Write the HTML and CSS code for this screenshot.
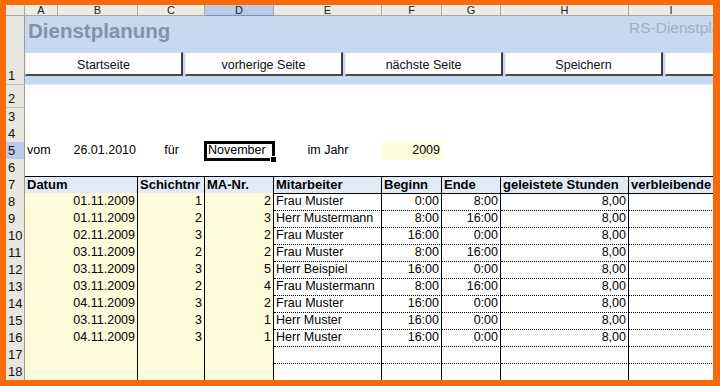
FILE: index.html
```html
<!DOCTYPE html>
<html>
<head>
  <meta charset="utf-8">
  <title>Dienstplanung</title>
  <link rel="stylesheet" href="styles.css">
</head>
<body>
  <div class="frame">
    <div class="row col-heads">
      <div class="corner"></div>
      <div class="colhead">A</div>
      <div class="colhead">B</div>
      <div class="colhead">C</div>
      <div class="colhead selected">D</div>
      <div class="colhead">E</div>
      <div class="colhead">F</div>
      <div class="colhead">G</div>
      <div class="colhead">H</div>
      <div class="colhead">I</div>
    </div>

    <div class="row row-banner">
      <div class="rowhead">1</div>
      <div class="banner">
        <div class="banner-top">
          <span class="title">Dienstplanung</span>
          <span class="subtitle">RS-Dienstplanung</span>
        </div>
        <div class="buttons">
          <button class="sheet-button">Startseite</button>
          <button class="sheet-button">vorherige Seite</button>
          <button class="sheet-button">nächste Seite</button>
          <button class="sheet-button">Speichern</button>
          <button class="sheet-button"></button>
        </div>
      </div>
    </div>

    <div class="row row-tall"><div class="rowhead">2</div></div>
    <div class="row"><div class="rowhead">3</div></div>
    <div class="row"><div class="rowhead">4</div></div>

    <div class="row">
      <div class="rowhead selected">5</div>
      <div class="plain">vom</div>
      <div class="plain num">26.01.2010</div>
      <div class="plain center">für</div>
      <div class="plain active">November</div>
      <div class="plain center">im Jahr</div>
      <div class="plain num yellow">2009</div>
    </div>

    <div class="row"><div class="rowhead">6</div></div>

    <div class="row">
      <div class="rowhead">7</div>
      <div class="head span2">Datum</div>
      <div class="head">Schichtnr</div>
      <div class="head">MA-Nr.</div>
      <div class="head">Mitarbeiter</div>
      <div class="head">Beginn</div>
      <div class="head">Ende</div>
      <div class="head">geleistete Stunden</div>
      <div class="head">verbleibende</div>
    </div>

    <div class="row">
      <div class="rowhead">8</div>
      <div class="cell span2 yellow num">01.11.2009</div>
      <div class="cell yellow num">1</div>
      <div class="cell yellow num">2</div>
      <div class="cell">Frau Muster</div>
      <div class="cell num">0:00</div>
      <div class="cell num">8:00</div>
      <div class="cell num">8,00</div>
      <div class="cell"></div>
    </div>
    <div class="row">
      <div class="rowhead">9</div>
      <div class="cell span2 yellow num">01.11.2009</div>
      <div class="cell yellow num">2</div>
      <div class="cell yellow num">3</div>
      <div class="cell">Herr Mustermann</div>
      <div class="cell num">8:00</div>
      <div class="cell num">16:00</div>
      <div class="cell num">8,00</div>
      <div class="cell"></div>
    </div>
    <div class="row">
      <div class="rowhead">10</div>
      <div class="cell span2 yellow num">02.11.2009</div>
      <div class="cell yellow num">3</div>
      <div class="cell yellow num">2</div>
      <div class="cell">Frau Muster</div>
      <div class="cell num">16:00</div>
      <div class="cell num">0:00</div>
      <div class="cell num">8,00</div>
      <div class="cell"></div>
    </div>
    <div class="row">
      <div class="rowhead">11</div>
      <div class="cell span2 yellow num">03.11.2009</div>
      <div class="cell yellow num">2</div>
      <div class="cell yellow num">2</div>
      <div class="cell">Frau Muster</div>
      <div class="cell num">8:00</div>
      <div class="cell num">16:00</div>
      <div class="cell num">8,00</div>
      <div class="cell"></div>
    </div>
    <div class="row">
      <div class="rowhead">12</div>
      <div class="cell span2 yellow num">03.11.2009</div>
      <div class="cell yellow num">3</div>
      <div class="cell yellow num">5</div>
      <div class="cell">Herr Beispiel</div>
      <div class="cell num">16:00</div>
      <div class="cell num">0:00</div>
      <div class="cell num">8,00</div>
      <div class="cell"></div>
    </div>
    <div class="row">
      <div class="rowhead">13</div>
      <div class="cell span2 yellow num">03.11.2009</div>
      <div class="cell yellow num">2</div>
      <div class="cell yellow num">4</div>
      <div class="cell">Frau Mustermann</div>
      <div class="cell num">8:00</div>
      <div class="cell num">16:00</div>
      <div class="cell num">8,00</div>
      <div class="cell"></div>
    </div>
    <div class="row">
      <div class="rowhead">14</div>
      <div class="cell span2 yellow num">04.11.2009</div>
      <div class="cell yellow num">3</div>
      <div class="cell yellow num">2</div>
      <div class="cell">Frau Muster</div>
      <div class="cell num">16:00</div>
      <div class="cell num">0:00</div>
      <div class="cell num">8,00</div>
      <div class="cell"></div>
    </div>
    <div class="row">
      <div class="rowhead">15</div>
      <div class="cell span2 yellow num">03.11.2009</div>
      <div class="cell yellow num">3</div>
      <div class="cell yellow num">1</div>
      <div class="cell">Herr Muster</div>
      <div class="cell num">16:00</div>
      <div class="cell num">0:00</div>
      <div class="cell num">8,00</div>
      <div class="cell"></div>
    </div>
    <div class="row">
      <div class="rowhead">16</div>
      <div class="cell span2 yellow num">04.11.2009</div>
      <div class="cell yellow num">3</div>
      <div class="cell yellow num">1</div>
      <div class="cell">Herr Muster</div>
      <div class="cell num">16:00</div>
      <div class="cell num">0:00</div>
      <div class="cell num">8,00</div>
      <div class="cell"></div>
    </div>
    <div class="row">
      <div class="rowhead">17</div>
      <div class="cell span2 yellow"></div>
      <div class="cell yellow"></div>
      <div class="cell yellow"></div>
      <div class="cell"></div>
      <div class="cell"></div>
      <div class="cell"></div>
      <div class="cell"></div>
      <div class="cell"></div>
    </div>
    <div class="row">
      <div class="rowhead">18</div>
      <div class="cell span2 yellow"></div>
      <div class="cell yellow"></div>
      <div class="cell yellow"></div>
      <div class="cell"></div>
      <div class="cell"></div>
      <div class="cell"></div>
      <div class="cell"></div>
      <div class="cell"></div>
    </div>
  </div>
</body>
</html>
```

FILE: styles.css
```css
html, body {
  margin: 0;
  height: 100%;
  overflow: hidden;
  background: #fb6a0a;
}

.frame {
  width: 707px;
  height: 375px;
  margin: 5px 0 0 6px;
  overflow: hidden;
  background: white;
  font-family: 'Liberation Sans', Arial, sans-serif;
  font-size: 12.5px;
  color: #000;
}

.row {
  display: grid;
  grid-template-columns: 19px 33px 80px 67px 69px 108px 60px 59px 128px 85px;
  height: 17px;
}

/* column letters */
.col-heads {
  height: 11px;
  background: #ecebe4;
}

.corner,
.colhead {
  box-sizing: border-box;
  border-right: 1px solid #a9a89e;
  border-bottom: 1px solid #a9a89e;
  overflow: hidden;
}

.colhead {
  font-size: 11px;
  line-height: 11px;
  text-align: center;
  color: #222;
}

.colhead.selected {
  background: #bccae6;
  border-bottom-color: #7d8fb8;
}

/* row numbers */
.rowhead {
  box-sizing: border-box;
  display: flex;
  align-items: flex-end;
  padding-left: 2px;
  background: #e7e6df;
  border-right: 1px solid #9c9b91;
  border-bottom: 1px solid #c0bfb5;
  font-size: 13px;
  line-height: 17px;
  color: #111;
}

.rowhead.selected {
  background: #bccae6;
}

.row-banner {
  height: 69px;
}

.row-tall {
  height: 23px;
}

/* title band */
.banner {
  grid-column: 2 / -1;
  box-sizing: border-box;
  padding-top: 4px;
  background: #c6d9f1;
  border-bottom: 1px solid #dde7f3;
}

.banner-top {
  display: flex;
  white-space: nowrap;
}

.title {
  flex: 0 0 604px;
  padding-left: 3px;
  box-sizing: border-box;
  font-size: 20.5px;
  font-weight: bold;
  line-height: 21px;
  color: #8191aa;
}

.subtitle {
  flex: 0 0 auto;
  font-size: 15.5px;
  line-height: 16px;
  color: #a4aebf;
}

.buttons {
  display: flex;
  gap: 2px;
  margin-top: 11px;
}

.sheet-button {
  flex: 0 0 158px;
  height: 24px;
  box-sizing: border-box;
  padding: 2px 0 0 0;
  background: #fdfdfd;
  border-top: 1px solid #d8d8d8;
  border-left: 1px solid #ececec;
  border-right: 2px solid #3c3c3c;
  border-bottom: 2px solid #4a4a4a;
  border-radius: 0;
  font-family: 'Liberation Sans', Arial, sans-serif;
  font-size: 12.5px;
  color: #111;
}

/* row 5 */
.plain {
  padding: 0 2px;
  line-height: 17px;
  white-space: nowrap;
}

.center {
  text-align: center;
}

.active {
  position: relative;
  box-shadow: 0 0 0 1px #000, inset 0 0 0 2px #000;
  padding-left: 3px;
}

.active::after {
  content: "";
  position: absolute;
  right: -3px;
  bottom: -3px;
  width: 5px;
  height: 5px;
  background: #000;
  border: 1px solid #fff;
}

/* table */
.head {
  box-sizing: border-box;
  padding: 0 2px;
  background: #e0ebf8;
  border-top: 1px solid #000;
  border-right: 1px solid #000;
  border-bottom: 1px solid #000;
  font-size: 13px;
  font-weight: bold;
  line-height: 15px;
  white-space: nowrap;
  overflow: hidden;
}

.cell {
  box-sizing: border-box;
  padding: 0 2px;
  border-right: 1px solid #000;
  border-bottom: 1px dotted #000;
  line-height: 16px;
  white-space: nowrap;
  overflow: hidden;
}

.span2 {
  grid-column: span 2;
}

.yellow {
  background: #fdfbda;
}

.num {
  text-align: right;
}
```
